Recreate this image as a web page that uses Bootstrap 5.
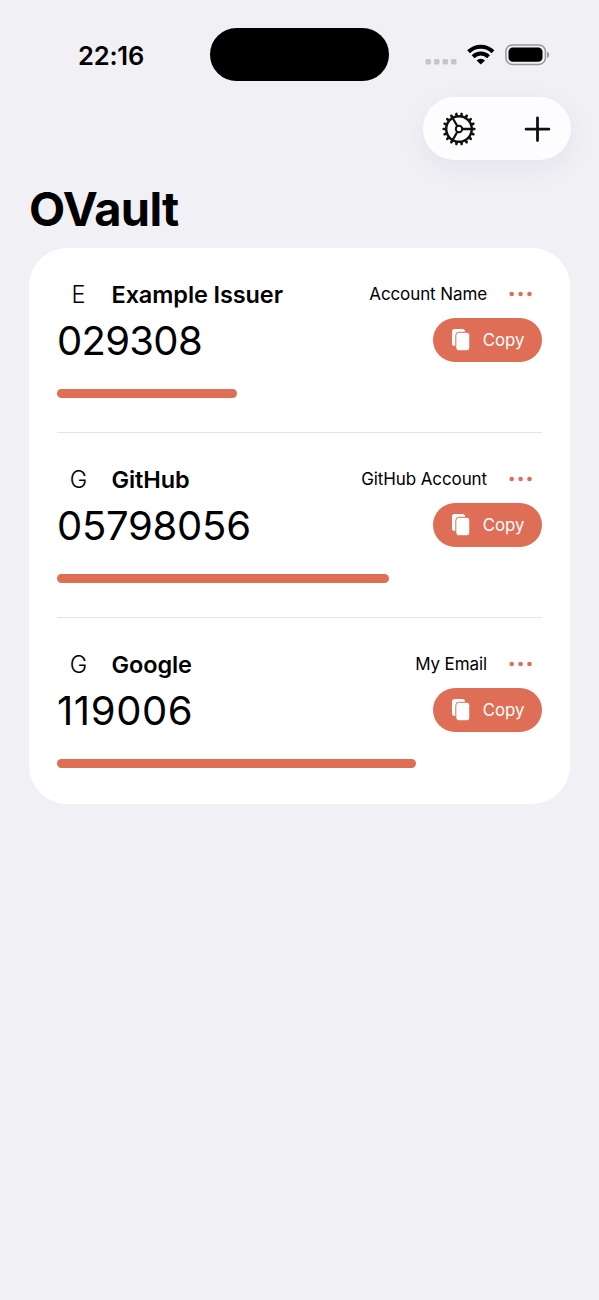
<!DOCTYPE html>
<html lang="en">
<head>
<meta charset="utf-8">
<meta name="viewport" content="width=device-width, initial-scale=1">
<title>OVault</title>
<link href="https://cdn.jsdelivr.net/npm/bootstrap@5.3.0/dist/css/bootstrap.min.css" rel="stylesheet">
<style>
  :root { --accent: #de6e56; }
  body { background: #f1f0f5; color: #000; font-family: Inter, "Liberation Sans", sans-serif; min-height: 1300px; line-height: 1; overflow-x: hidden; }
  svg { display: block; flex: none; }
  .status { height: 97px; padding: 28px 49px 0 78px; }
  .clock { font-size: 25.5px; font-weight: 600; line-height: 56px; width: 132px; letter-spacing: -.2px; }
  .island { width: 179px; height: 53px; background: #000; }
  .signals { margin-left: 36px; height: 53px; }
  .tools { width: 148px; height: 63px; margin-right: 28px; background: #fdfcff; box-shadow: 0 8px 28px rgba(40,30,60,.06); }
  .tool { background: none; border: 0; padding: 0; color: #111; }
  .brand-title { font-size: 47px; font-weight: 700; line-height: 56px; margin: 21px 0 11px 29px; letter-spacing: -.7px; }
  .vault { margin: 0 29px; padding: 0 28px; background: #fff; border-radius: 38px; height: 556px; }
  .entry { height: 185px; padding-top: 32px; }
  .entry + .entry { box-shadow: 0 -1px #e4e4e6; }
  .head { height: 28px; }
  .head span { position: relative; top: 1px; }
  .initial { width: 43px; font-size: 23.5px; font-weight: 300; text-align: center; }
  .issuer { margin-left: 11.5px; font-size: 23.5px; font-weight: 600; letter-spacing: -.1px; }
  .account { font-size: 17px; letter-spacing: -.1px; }
  .head .account { top: .5px; }
  .more { margin: 0 9px 0 22px; color: var(--accent); }
  .code-line { height: 44px; margin-top: 10px; }
  .code { font-size: 40px; line-height: 44px; padding-top: 1px; }
  .copy { width: 109px; height: 44px; background: var(--accent); color: #fff; font-size: 16.8px; border: 0; padding: 0 17.5px 0 19px; }
  .timer { height: 9px; margin-top: 26.5px; background: var(--accent); border-radius: 5px; }
</style>
</head>
<body>
<header>
  <div class="status d-flex align-items-start">
    <div class="clock">22:16</div>
    <div class="island rounded-pill"></div>
    <div class="signals d-flex align-items-center">
      <svg width="125" height="53" viewBox="425 28 125 53">
        <g fill="#c4c4c9"><rect x="425.500" y="59" width="5.500" height="5.500" rx="1.500"/><rect x="434" y="59" width="5.500" height="5.500" rx="1.500"/><rect x="442.500" y="59" width="5.500" height="5.500" rx="1.500"/><rect x="451" y="59" width="5.500" height="5.500" rx="1.500"/></g>
        <g fill="none" stroke="#000" stroke-width="4"><path d="M468.600 51.700a17.400 17.400 0 0 1 24.400 0"/><path d="M473.100 56.700a11 11 0 0 1 15.400 0"/></g>
        <path d="M476.600 60.500a6 6 0 0 1 8.400 0L480.800 64.600z"/>
        <rect x="505.900" y="44.900" width="39.500" height="19.500" rx="6.500" fill="none" stroke="#99999d" stroke-width="1.500"/>
        <rect x="508.500" y="47.500" width="34" height="14.300" rx="4.300"/>
        <path d="M547 51.500q2.300 1 2.300 3.200t-2.300 3.200z" fill="#99999d"/>
      </svg>
    </div>
  </div>
  <div class="d-flex justify-content-end">
    <div class="tools rounded-pill d-flex align-items-center">
      <button class="tool" style="margin-left:18px" aria-label="Settings"><svg width="36" height="36" viewBox="-18 -18 36 36" fill="none" stroke="currentColor"><circle r="12.800" stroke-width="2.500"/><circle r="3.200" stroke-width="2"/><path d="M3.500 0H13M-1.750-3.030L-6.500-11.260M-1.750 3.030L-6.500 11.260" stroke-width="2.300"/><path id="teeth" stroke-width="2.600" stroke-linecap="round"/></svg></button>
      <button class="tool" style="margin-left:47px" aria-label="Add"><svg width="27" height="27" viewBox="0 0 27 27" stroke="currentColor" stroke-width="2.800" stroke-linecap="round"><path d="M13.500 2.800v22.800M2.100 14.200h22.800"/></svg></button>
    </div>
  </div>
  <h1 class="brand-title">OVault</h1>
</header>
<main class="vault" id="vault"></main>
<script src="https://cdn.jsdelivr.net/npm/bootstrap@5.3.0/dist/js/bootstrap.bundle.min.js"></script>
<script>
  // 18 evenly spaced gear teeth
  document.getElementById('teeth').setAttribute('d', Array.from({ length: 18 }, (_, i) => {
    const a = i * Math.PI / 9, c = Math.cos(a), s = Math.sin(a);
    return `M${c * 13.5} ${s * 13.5}L${c * 15.3} ${s * 15.3}`;
  }).join(''));

  // issuer, account, code, percent of time left, tracking of the code in px
  const entries = [
    ['Example Issuer', 'Account Name', '029308', 37.1, -0.7],
    ['GitHub', 'GitHub Account', '05798056', 68.5, -0.25],
    ['Google', 'My Email', '119006', 74, 0.6]
  ];
  document.getElementById('vault').innerHTML = entries.map(([issuer, account, code, left, track]) => `
    <section class="entry">
      <div class="head d-flex align-items-center">
        <span class="initial">${issuer[0]}</span><span class="issuer">${issuer}</span>
        <span class="account ms-auto">${account}</span>
        <svg class="more" width="24" height="6" viewBox="0 0 24 6" fill="currentColor"><circle cx="2.700" cy="3" r="2.300"/><circle cx="11.600" cy="3" r="2.300"/><circle cx="20.500" cy="3" r="2.300"/></svg>
      </div>
      <div class="code-line d-flex align-items-center justify-content-between">
        <span class="code" style="letter-spacing:${track}px">${code}</span>
        <button class="copy rounded-pill d-flex align-items-center justify-content-between"><svg width="18" height="22" viewBox="0 0 18 22"><rect width="13" height="17" rx="2.500" fill="#fff"/><rect x="3.800" y="3.300" width="14" height="18.500" rx="3" fill="#fff" stroke="#de6e56"/></svg><span>Copy</span></button>
      </div>
      <div class="timer" style="width:${left}%"></div>
    </section>`).join('');
</script>
</body>
</html>
